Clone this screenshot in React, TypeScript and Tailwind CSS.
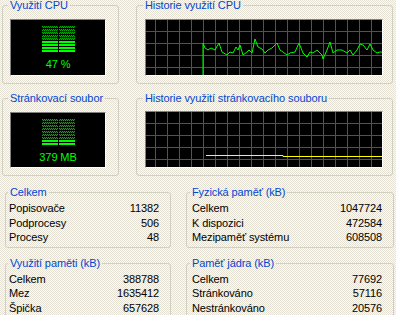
import React from 'react'

const FONT = "font-['Liberation_Sans',Arial,sans-serif]"

// cpu history points, relative to the graph box (238x57)
const CPU_POINTS: [number, number][] = [
  [58, 57], [58, 24], [60, 29], [63, 31], [66, 29], [70, 31], [74, 24], [77, 33], [82, 36], [85, 33],
  [88, 34], [91, 28], [93, 31], [95, 26], [98, 36], [102, 33], [104, 31], [107, 34], [110, 20], [113, 28],
  [117, 30], [120, 34], [123, 31], [127, 29], [132, 24], [135, 31], [138, 33], [142, 36], [145, 34], [150, 33],
  [154, 24], [158, 34], [162, 38], [165, 33], [168, 34], [172, 31], [177, 36], [178, 40], [182, 31], [185, 23],
  [188, 34], [192, 31], [197, 31], [202, 34], [205, 31], [208, 36], [212, 31], [215, 25], [218, 26], [222, 31],
  [225, 25], [228, 31], [232, 34], [235, 33], [238, 33],
]

function Group({ title, className, legendClass, children }: { title: string; className: string; legendClass: string; children: React.ReactNode }) {
  return (
    <fieldset className={`border border-[#d0d0bf] rounded-[3px] ${className}`}>
      <legend className={`px-[2px] text-[#0046d5] text-[11px] leading-[13px] ${legendClass}`}>{title}</legend>
      {children}
    </fieldset>
  )
}

function Meter({ id, bright, label, h }: { id: string; bright: number; label: string; h: string }) {
  const rows = Array.from({ length: 9 }, (_, i) => i)
  return (
    <div className={`w-[96px] ${h} bg-black border-t border-l border-[#808080] border-r-white border-b-white border-r border-b flex flex-col items-center`}>
      <svg width="33" height="26" className="mt-[6px] block">
        <defs>
          <pattern id={id} width="2" height="2" patternUnits="userSpaceOnUse">
            <rect width="2" height="2" fill="#003000" />
            <rect width="1" height="1" fill="#00b000" />
            <rect x="1" y="1" width="1" height="1" fill="#00b000" />
          </pattern>
        </defs>
        {rows.map((r) => {
          const on = r >= 9 - bright
          const fill = on ? '#00ff00' : `url(#${id})`
          return (
            <g key={r}>
              <rect x="0" y={r * 3} width="16" height="2" fill={fill} />
              <rect x="17" y={r * 3} width="16" height="2" fill={fill} />
            </g>
          )
        })}
      </svg>
      <div className="mt-[6px] text-[#00ff00] text-[11px] leading-[13px]">{label}</div>
    </div>
  )
}

function Graph({ children }: { children?: React.ReactNode }) {
  const vx = Array.from({ length: 20 }, (_, i) => 10 + i * 12)
  const hy = [12, 24, 36, 48]
  return (
    <div className="w-[238px] h-[57px] bg-black border-t border-l border-[#808080] border-r-white border-b-white border-r border-b overflow-hidden">
      <svg width="236" height="55" className="block">
        <g transform="translate(-1,-1)">
          {vx.map((x) => (
            <line key={x} x1={x + 0.5} y1="0" x2={x + 0.5} y2="57" stroke="#008040" strokeWidth="1" />
          ))}
          {hy.map((y) => (
            <line key={y} x1="0" y1={y + 0.5} x2="238" y2={y + 0.5} stroke="#008040" strokeWidth="1" />
          ))}
          {children}
        </g>
      </svg>
    </div>
  )
}

function Row({ label, value }: { label: string; value: string }) {
  return (
    <div className="flex justify-between h-[14.5px] leading-[14.5px] text-black text-[11px]">
      <span>{label}</span>
      <span>{value}</span>
    </div>
  )
}

export default function App() {
  return (
    <div className={`w-[396px] h-[315px] overflow-hidden ${FONT} tracking-[-0.1px] bg-[#f1eee6] bg-[image:repeating-conic-gradient(#fcfbf7_0%_25%,#e5e1d4_0%_50%)] bg-[length:2px_2px]`}>
      {/* graphs, row 1 */}
      <div className="flex mt-[-1px]">
        <Group title="Využití CPU" className="ml-[2px] w-[117px] pt-[7px] pb-[7px]" legendClass="ml-[5px]">
          <div className="ml-[7px]">
            <Meter id="cpu-dim" bright={4} label="47 %" h="h-[57px]" />
          </div>
        </Group>
        <Group title="Historie využití CPU" className="ml-[17px] w-[257px] pt-[7px] pb-[7px]" legendClass="ml-[6px]">
          <div className="ml-[8px]">
            <Graph>
              <polyline points={CPU_POINTS.map((p) => p.join(',')).join(' ')} fill="none" stroke="#00ff00" strokeWidth="1" />
            </Graph>
          </div>
        </Group>
      </div>

      {/* graphs, row 2 */}
      <div className="flex mt-[8px]">
        <Group title="Stránkovací soubor" className="ml-[2px] w-[117px] pt-[7px] pb-[7px]" legendClass="ml-[5px]">
          <div className="ml-[7px]">
            <Meter id="pf-dim" bright={2} label="379 MB" h="h-[56px]" />
          </div>
        </Group>
        <Group title="Historie využití stránkovacího souboru" className="ml-[17px] w-[257px] pt-[6px] pb-[7px]" legendClass="ml-[6px]">
          <div className="ml-[8px]">
            <Graph>
              <polyline points="61,44.5 138,44.5 138,45.5 238,45.5" fill="none" stroke="#ffff00" strokeWidth="1" />
            </Graph>
          </div>
        </Group>
      </div>

      {/* totals / physical memory */}
      <div className="flex mt-[10px]">
        <Group title="Celkem" className="ml-[5px] w-[166px] pt-[2px] pb-[2px] pl-[3px] pr-[11px]" legendClass="ml-[-1px]">
          <Row label="Popisovače" value="11382" />
          <Row label="Podprocesy" value="506" />
          <Row label="Procesy" value="48" />
        </Group>
        <Group title="Fyzická paměť (kB)" className="ml-[15px] w-[208px] pt-[2px] pb-[2px] pl-[5px] pr-[11px]" legendClass="ml-[-2px]">
          <Row label="Celkem" value="1047724" />
          <Row label="K dispozici" value="472584" />
          <Row label="Mezipaměť systému" value="608508" />
        </Group>
      </div>

      {/* commit charge / kernel memory */}
      <div className="flex mt-[9px]">
        <Group title="Využití paměti (kB)" className="ml-[5px] w-[166px] pt-[2px] pb-[2px] pl-[3px] pr-[11px]" legendClass="ml-[-1px]">
          <Row label="Celkem" value="388788" />
          <Row label="Mez" value="1635412" />
          <Row label="Špička" value="657628" />
        </Group>
        <Group title="Paměť jádra (kB)" className="ml-[15px] w-[208px] pt-[2px] pb-[2px] pl-[5px] pr-[11px]" legendClass="ml-[-2px]">
          <Row label="Celkem" value="77692" />
          <Row label="Stránkováno" value="57116" />
          <Row label="Nestránkováno" value="20576" />
        </Group>
      </div>
    </div>
  )
}
